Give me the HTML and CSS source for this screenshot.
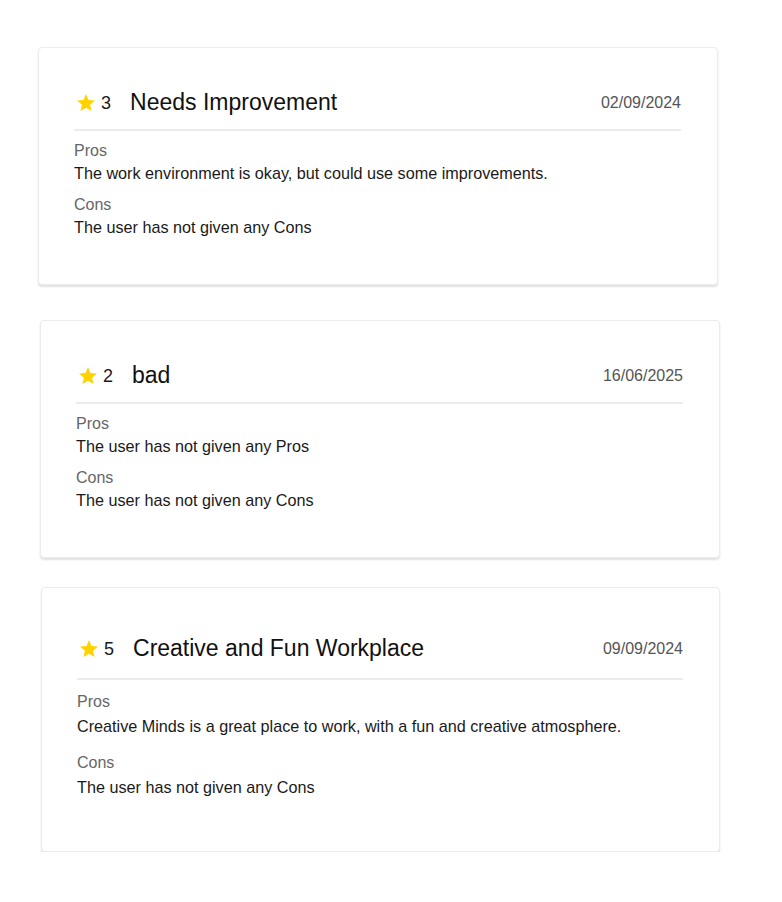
FILE: index.html
```html
<!DOCTYPE html>
<html>
<head>
<meta charset="utf-8">
<link rel="stylesheet" href="styles.css">
</head>
<body>
<div class="list">
  <div class="card card-a">
    <div class="head">
      <div class="rating">
        <svg class="star" viewBox="2 2 20 19" width="18" height="17"><path d="M12 17.27L18.18 21l-1.64-7.03L22 9.24l-7.19-.61L12 2 9.19 8.63 2 9.24l5.46 4.73L5.82 21z"/></svg>
        <span class="num">3</span>
      </div>
      <div class="title">Needs Improvement</div>
      <div class="date">02/09/2024</div>
    </div>
    <div class="label">Pros</div>
    <div class="text">The work environment is okay, but could use some improvements.</div>
    <div class="label cons">Cons</div>
    <div class="text">The user has not given any Cons</div>
  </div>

  <div class="card card-b">
    <div class="head">
      <div class="rating">
        <svg class="star" viewBox="2 2 20 19" width="18" height="17"><path d="M12 17.27L18.18 21l-1.64-7.03L22 9.24l-7.19-.61L12 2 9.19 8.63 2 9.24l5.46 4.73L5.82 21z"/></svg>
        <span class="num">2</span>
      </div>
      <div class="title">bad</div>
      <div class="date">16/06/2025</div>
    </div>
    <div class="label">Pros</div>
    <div class="text">The user has not given any Pros</div>
    <div class="label cons">Cons</div>
    <div class="text">The user has not given any Cons</div>
  </div>

  <div class="card card-c">
    <div class="head">
      <div class="rating">
        <svg class="star" viewBox="2 2 20 19" width="18" height="17"><path d="M12 17.27L18.18 21l-1.64-7.03L22 9.24l-7.19-.61L12 2 9.19 8.63 2 9.24l5.46 4.73L5.82 21z"/></svg>
        <span class="num">5</span>
      </div>
      <div class="title">Creative and Fun Workplace</div>
      <div class="date">09/09/2024</div>
    </div>
    <div class="label">Pros</div>
    <div class="text">Creative Minds is a great place to work, with a fun and creative atmosphere.</div>
    <div class="label cons">Cons</div>
    <div class="text">The user has not given any Cons</div>
  </div>
</div>
</body>
</html>
```
FILE: styles.css
```css
* { box-sizing: border-box; }
html, body {
  margin: 0;
  padding: 0;
  background: #ffffff;
  font-family: "Liberation Sans", Arial, sans-serif;
}
.list {
  padding-top: 47px;
  display: flex;
  flex-direction: column;
}
.card {
  width: 680px;
  background: #fff;
  border: 1px solid #ececec;
  border-radius: 4px;
  box-shadow: 0 2px 2px rgba(0,0,0,0.12);
  padding: 35px 36px 47px 35px;
}
.card-a { margin-left: 38px; height: 238px; }
.card-b { margin-left: 40px; margin-top: 35px; height: 238px; }
.card-c { margin-left: 41px; margin-top: 29px; width: 679px; height: 265px; padding-top: 39px; }

.head {
  display: flex;
  align-items: center;
  height: 40px;
  border-bottom: 2px solid #ebebeb;
  box-sizing: content-box;
  padding-bottom: 6px;
}
.card-c .head { height: 44px; padding-bottom: 7px; }
.rating {
  display: flex;
  align-items: center;
  margin-left: 3px;
}
.star { fill: #ffd200; display: block; margin-top: -1px; }
.num {
  font-size: 18px;
  color: #1a1a1a;
  margin-left: 6px;
}
.title {
  font-size: 23px;
  color: #111;
  margin-left: 19px;
  margin-top: -1px;
  flex: 1;
}
.date {
  font-size: 16px;
  color: #555;
  margin-right: 0;
}
.label {
  font-size: 16px;
  line-height: 22px;
  color: #666;
  margin-top: 9px;
}
.label.cons { margin-top: 10px; }
.text {
  font-size: 16.2px;
  line-height: 22px;
  color: #1a1a1a;
}
.card-c .label { line-height: 24px; margin-top: 10px; }
.card-c .label.cons { margin-top: 13px; }
.card-c .text { line-height: 24px; }
```
